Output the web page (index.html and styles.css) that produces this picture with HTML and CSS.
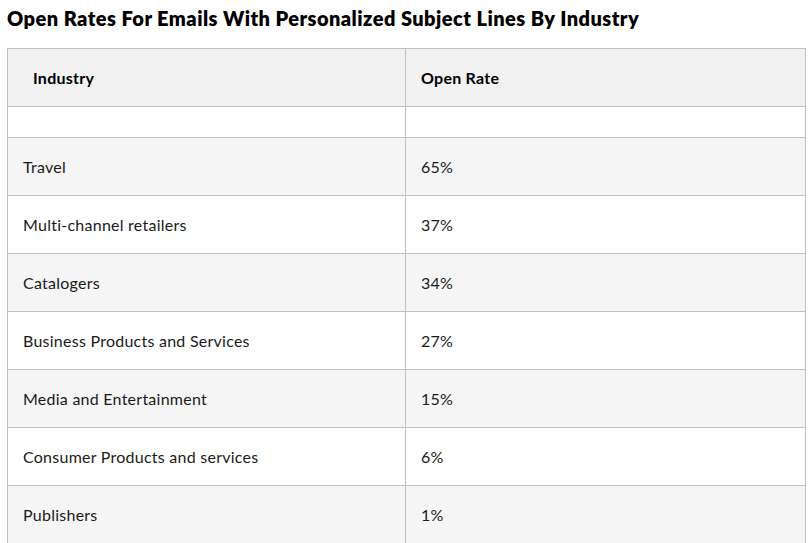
FILE: index.html
```html
<!DOCTYPE html>
<html lang="en">
<head>
<meta charset="utf-8">
<title>Open Rates</title>
<link rel="stylesheet" href="styles.css">
</head>
<body>
<h2 class="title">Open Rates For Emails With Personalized Subject Lines By Industry</h2>
<table class="rates">
  <thead>
    <tr>
      <th class="first">Industry</th>
      <th>Open Rate</th>
    </tr>
  </thead>
  <tbody>
    <tr class="empty"><td></td><td></td></tr>
    <tr><td>Travel</td><td>65%</td></tr>
    <tr><td>Multi-channel retailers</td><td>37%</td></tr>
    <tr><td>Catalogers</td><td>34%</td></tr>
    <tr><td>Business Products and Services</td><td>27%</td></tr>
    <tr><td>Media and Entertainment</td><td>15%</td></tr>
    <tr><td>Consumer Products and services</td><td>6%</td></tr>
    <tr><td>Publishers</td><td>1%</td></tr>
  </tbody>
</table>
</body>
</html>
```
FILE: styles.css
```css
html, body {
  margin: 0;
  padding: 0;
  background: #ffffff;
}
body {
  padding: 0 7px;
  font-family: "Lato", "Liberation Sans", sans-serif;
  color: #111111;
}
.title {
  margin: 0;
  padding-top: 5px;
  font-size: 20px;
  line-height: 26px;
  font-weight: 800;
  letter-spacing: 0.45px;
  color: #000000;
  height: 48px;
  box-sizing: border-box;
}
.rates {
  border-collapse: collapse;
  width: 799px;
  table-layout: fixed;
}
.rates th,
.rates td {
  border: 1px solid #c0c0c0;
  text-align: left;
  padding: 0 15px;
  font-size: 16px;
  letter-spacing: 0.25px;
  vertical-align: middle;
}
.rates th:first-child,
.rates td:first-child {
  width: 398px;
  box-sizing: border-box;
}
.rates th {
  background: #f1f1f1;
  height: 57px;
  font-weight: 700;
  color: #000000;
}
.rates th.first {
  padding-left: 25px;
}
.rates td {
  height: 57px;
  color: #1a1a1a;
}
.rates tr.empty td {
  height: 30px;
}
.rates tbody tr:nth-child(even) td {
  background: #f5f5f5;
}
.rates tbody tr:nth-child(odd) td {
  background: #ffffff;
}
```
